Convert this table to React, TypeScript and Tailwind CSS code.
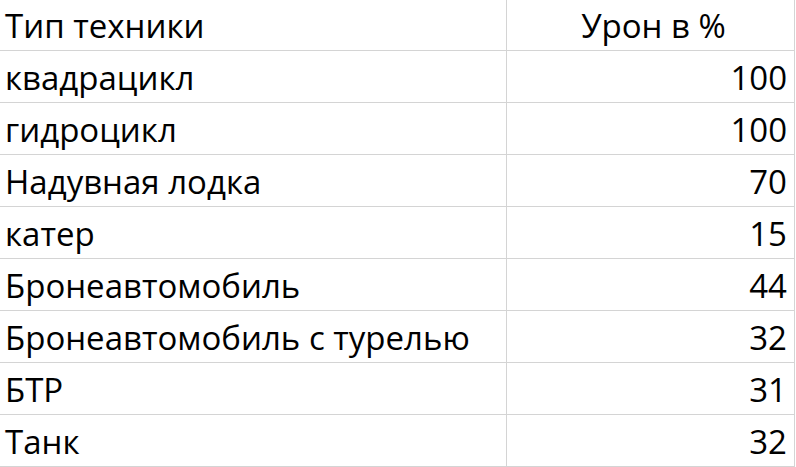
import React from "react";

const rows: [string, string][] = [
  ["квадрацикл", "100"],
  ["гидроцикл", "100"],
  ["Надувная лодка", "70"],
  ["катер", "15"],
  ["Бронеавтомобиль", "44"],
  ["Бронеавтомобиль с турелью", "32"],
  ["БТР", "31"],
  ["Танк", "32"],
];

export default function App() {
  return (
    <div
      className="w-[796px] h-[467px] bg-white text-black overflow-hidden"
      style={{ fontFamily: '"Open Sans", sans-serif' }}
    >
      <div className="grid grid-cols-[507px_288px] w-[795px]">
        {/* Заголовок */}
        <div className="h-[51px] border-b border-r border-[#d4d4d4] pl-[5px] text-[33px] leading-[50px] pt-[1px]">
          Тип техники
        </div>
        <div className="h-[51px] border-b border-r border-[#d4d4d4] pl-[6px] text-center text-[33px] leading-[50px] pt-[1px]">
          Урон в %
        </div>
        {rows.map(([name, val]) => (
          <React.Fragment key={name}>
            <div className="h-[52px] border-b border-r border-[#d4d4d4] pl-[5px] text-[33px] leading-[51px] pt-[1px] whitespace-nowrap">
              {name}
            </div>
            <div className="h-[52px] border-b border-r border-[#d4d4d4] pr-[7px] text-right text-[33px] leading-[51px] pt-[1px]">
              {val}
            </div>
          </React.Fragment>
        ))}
      </div>
    </div>
  );
}
